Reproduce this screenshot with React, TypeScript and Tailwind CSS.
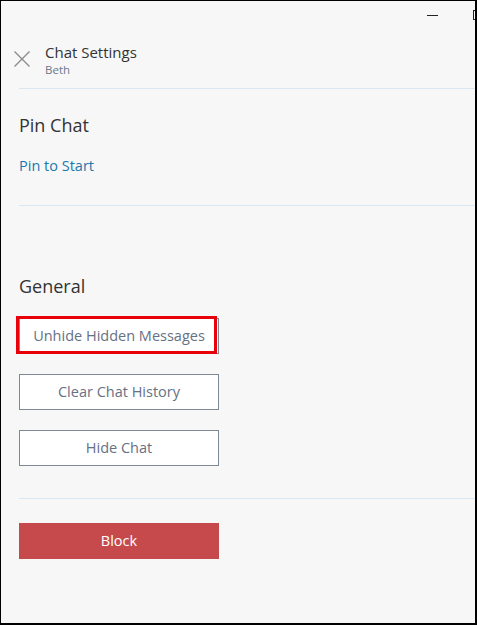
import React from 'react';

const font = { fontFamily: '"Open Sans", "Noto Sans", sans-serif' };

function Divider({ className = '' }: { className?: string }) {
  return <div className={`ml-[18px] h-px bg-[#d9e7f3] ${className}`} />;
}

function OutlineButton({ label, highlighted }: { label: string; highlighted?: boolean }) {
  return (
    <div className="relative w-[200px]">
      <button
        type="button"
        className="flex h-[36px] w-[200px] items-center justify-center border border-[#7d8899] bg-white text-[14.5px] text-[#667184]"
      >
        {label}
      </button>
      {highlighted ? (
        <div className="pointer-events-none absolute left-[-3px] top-[-2px] h-[38px] w-[201px] border-[3px] border-[#e8000b]" />
      ) : null}
    </div>
  );
}

export default function App() {
  return (
    <div
      className="relative h-[625px] w-[477px] overflow-hidden border-b-2 border-l border-r-2 border-t border-black bg-[#f7f7f7]"
      style={font}
    >
      {/* title bar controls */}
      <div className="absolute left-[426px] top-[14px] h-px w-[11px] bg-[#222]" />
      <div className="absolute left-[472px] top-[9px] h-[10px] w-[10px] border border-[#222]" />

      <div className="flex h-[87px] items-start pt-[41px]">
        <div className="ml-[12px] mt-[8px] h-[18px] w-[18px]">
          <svg viewBox="0 0 18 18" className="h-[18px] w-[18px]">
            <path d="M1.5 1.5 L16.5 16.5 M16.5 1.5 L1.5 16.5" stroke="#8c8c8c" strokeWidth="1.4" fill="none" />
          </svg>
        </div>
        <div className="ml-[14px] flex flex-col">
          <span className="text-[15px] leading-[20px] text-[#333]">Chat Settings</span>
          <span className="text-[11.5px] leading-[16px] text-[#6b778a]">Beth</span>
        </div>
      </div>
      <Divider />

      <div className="px-[18px] pt-[24px]">
        <p className="text-[18px] leading-[24px] text-[#333]">Pin Chat</p>
        <p className="mt-[19px] text-[14.5px] leading-[20px] text-[#1d78ad]">Pin to Start</p>
      </div>
      <Divider className="mt-[29px]" />

      <div className="px-[18px] pt-[68px]">
        <p className="text-[18px] leading-[24px] text-[#333]">General</p>
        <div className="mt-[20px] flex flex-col gap-[20px]">
          <OutlineButton label="Unhide Hidden Messages" highlighted />
          <OutlineButton label="Clear Chat History" />
          <OutlineButton label="Hide Chat" />
        </div>
      </div>
      <Divider className="mt-[32px]" />

      <div className="px-[18px] pt-[24px]">
        <button
          type="button"
          className="flex h-[36px] w-[200px] items-center justify-center bg-[#c64a4b] text-[14.5px] text-white"
        >
          Block
        </button>
      </div>
    </div>
  );
}
